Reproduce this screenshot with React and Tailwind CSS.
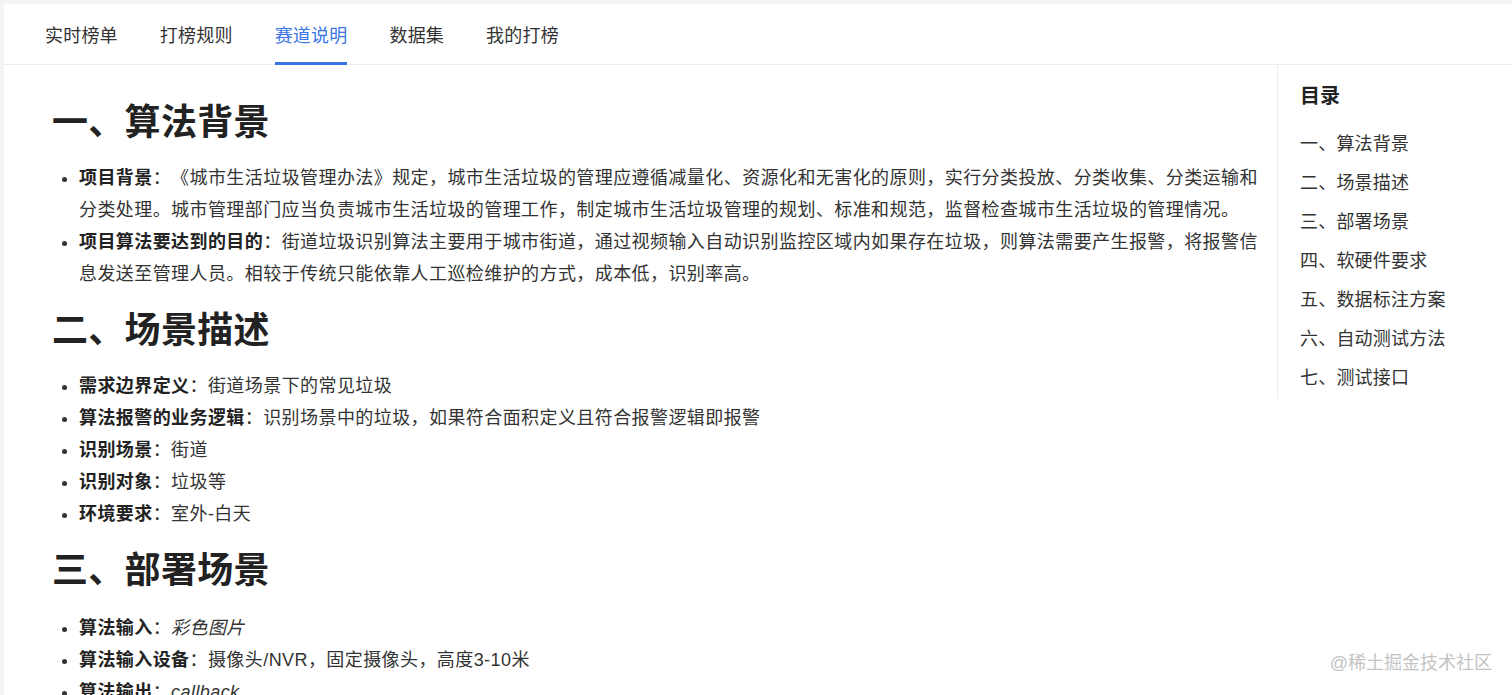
import React from 'react';

const tabs = ['实时榜单', '打榜规则', '赛道说明', '数据集', '我的打榜'];

const toc = [
  '一、算法背景',
  '二、场景描述',
  '三、部署场景',
  '四、软硬件要求',
  '五、数据标注方案',
  '六、自动测试方法',
  '七、测试接口',
];

const Heading = ({ children }) => (
  <h2 className="text-[36px] leading-[48px] font-bold text-[#222] mt-[17px] mb-[15px] tracking-[0.3px]">{children}</h2>
);

const Item = ({ label, children }) => (
  <li className="leading-[32px]">
    <strong className="font-bold text-[#222]">{label}</strong>：{children}
  </li>
);

const App = () => {
  return (
    <div
      className="min-h-screen bg-[#f4f4f5] pt-[4px] pl-[4px] overflow-hidden [text-spacing-trim:space-all]"
      style={{ fontFamily: '"Liberation Sans", "Noto Sans CJK SC", sans-serif' }}
    >
      <div className="bg-white h-[691px] relative">
        {/* tabs */}
        <div className="flex gap-[42px] pl-[41px] h-[61px] border-b border-[#ececec]">
          {tabs.map((t) => (
            <div
              key={t}
              className={
                t === '赛道说明'
                  ? 'flex items-center text-[18px] tracking-[0.2px] text-[#3a74e4] border-b-[3px] border-[#3a74e4] pt-[7px] -mb-px'
                  : 'flex items-center text-[18px] tracking-[0.2px] text-[#333] pt-[4px]'
              }
            >
              {t}
            </div>
          ))}
        </div>

        <div className="flex">
          {/* main article */}
          <div className="flex-1 pl-[48px] pr-[18px] pt-[17px] text-[18px] tracking-[0.42px] text-[#333]">
            <Heading>一、算法背景</Heading>
            <ul className="list-disc pl-[27px]">
              <Item label="项目背景">
                《城市生活垃圾管理办法》规定，城市生活垃圾的管理应遵循减量化、资源化和无害化的原则，实行分类投放、分类收集、分类运输和分类处理。城市管理部门应当负责城市生活垃圾的管理工作，制定城市生活垃圾管理的规划、标准和规范，监督检查城市生活垃圾的管理情况。
              </Item>
              <Item label="项目算法要达到的目的">
                街道垃圾识别算法主要用于城市街道，通过视频输入自动识别监控区域内如果存在垃圾，则算法需要产生报警，将报警信息发送至管理人员。相较于传统只能依靠人工巡检维护的方式，成本低，识别率高。
              </Item>
            </ul>

            <Heading>二、场景描述</Heading>
            <ul className="list-disc pl-[27px]">
              <Item label="需求边界定义">街道场景下的常见垃圾</Item>
              <Item label="算法报警的业务逻辑">识别场景中的垃圾，如果符合面积定义且符合报警逻辑即报警</Item>
              <Item label="识别场景">街道</Item>
              <Item label="识别对象">垃圾等</Item>
              <Item label="环境要求">室外-白天</Item>
            </ul>

            <Heading>三、部署场景</Heading>
            <ul className="list-disc pl-[27px] pt-[2px]">
              <Item label="算法输入">
                <em>彩色图片</em>
              </Item>
              <Item label="算法输入设备">摄像头/NVR，固定摄像头，高度3-10米</Item>
              <Item label="算法输出">
                <em>callback</em>
              </Item>
            </ul>
          </div>

          {/* table of contents */}
          <div className="w-[235px] shrink-0">
            <div className="border-l border-[#ececec] pl-[22px] pt-[16px] h-[333px]">
              <div className="text-[20px] font-bold text-[#222] leading-[30px]">目录</div>
              <ul className="mt-[14px] text-[18px] tracking-[0.2px] text-[#333]">
                {toc.map((t) => (
                  <li key={t} className="leading-[39px]">
                    {t}
                  </li>
                ))}
              </ul>
            </div>
          </div>
        </div>

        {/* watermark */}
        <div className="absolute right-[20px] bottom-[18px] text-[18px] text-[#c4c4c4]">@稀土掘金技术社区</div>
      </div>
    </div>
  );
};

export default App;
